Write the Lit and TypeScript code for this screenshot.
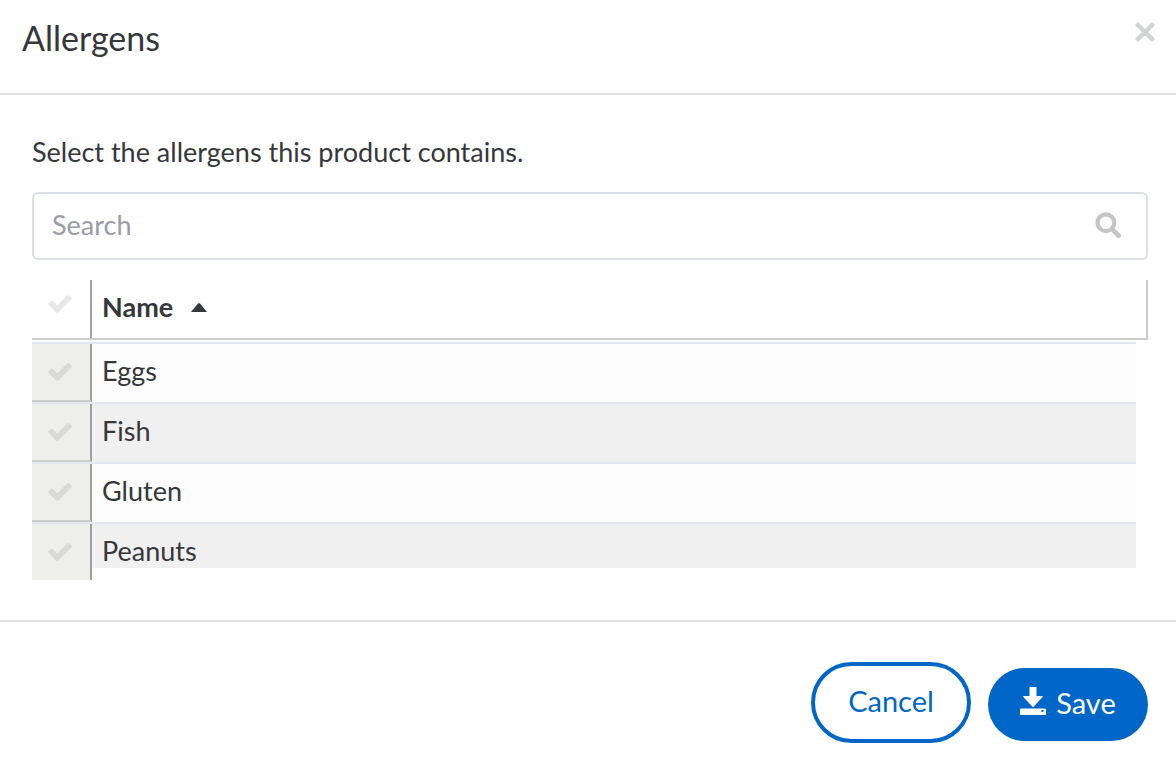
import { LitElement, html, css, svg } from "lit";
import { customElement, state } from "lit/decorators.js";

const check = svg`<path fill="currentColor" d="M1671 566q0 40-28 68l-724 724-136 136q-28 28-68 28t-68-28l-136-136-362-362q-28-28-28-68t28-68l136-136q28-28 68-28t68 28l294 295 656-657q28-28 68-28t68 28l136 136q28 28 28 68z"/>`;

@customElement("app-root")
export class AppRoot extends LitElement {
  static styles = css`
    :host {
      display: block;
      min-height: 100vh;
      background: #fff;
      color: #36373b;
      font-family: Lato, "Open Sans", sans-serif;
      font-size: 27px;
      line-height: 36px;
    }
    * { box-sizing: border-box; }
    button, input { font: inherit; margin: 0; }
    header {
      display: flex;
      justify-content: space-between;
      align-items: flex-start;
      padding: 18px 20px 35px 22px;
      border-bottom: 2px solid #dfdfe0;
    }
    h1 { margin: 0; font-size: 34px; line-height: 40px; font-weight: 400; }
    .close {
      display: flex;
      border: 0;
      padding: 3px 0;
      background: none;
      color: #d2d4d4;
      cursor: pointer;
    }
    main { padding: 39px 28px 40px 32px; }
    p { margin: 0 0 22px; }
    .search {
      display: flex;
      align-items: center;
      height: 68px;
      padding: 0 25px 2px 18px;
      border: 2px solid #dce0e5;
      border-radius: 6px;
      color: #c5c5c5;
    }
    .search input {
      flex: 1;
      min-width: 0;
      padding: 0;
      border: 0;
      outline: 0;
      background: none;
      color: #36373b;
    }
    .search input::placeholder { color: #9c9ba8; opacity: 1; }
    .grid { position: relative; margin-top: 20px; }
    table, thead, tbody { display: block; }
    tr { display: grid; grid-template-columns: 60px 1fr; }
    th, td { display: block; padding: 0; text-align: left; }
    thead { border-bottom: 2px solid #ccc; border-right: 2px solid #ccc; }
    thead tr { height: 58px; }
    .pick { border-right: 2px solid #a0a0a0; }
    .pick label { display: grid; place-items: center; height: 100%; padding-right: 2px; color: #d9d9d7; cursor: pointer; }
    thead .pick label { padding-bottom: 10px; color: #e8e8e8; }
    .pick input { appearance: none; grid-area: 1 / 1; width: 24px; height: 24px; }
    .pick svg { grid-area: 1 / 1; pointer-events: none; }
    .pick input:checked + svg { color: #0067c8; }
    .sort {
      display: flex;
      align-items: center;
      gap: 18px;
      height: 54px;
      padding: 0 10px;
      border: 0;
      background: none;
      color: inherit;
      font-weight: 700;
      cursor: pointer;
    }
    .desc svg { transform: rotate(180deg); }
    tbody { height: 238px; margin-top: 2px; padding-right: 12px; overflow: hidden; }
    tbody tr { height: 60px; border-top: 2px solid #e4e8ed; background: #fdfdfd; }
    tbody tr:nth-child(even) { background: #f0f0f0; }
    tbody .pick { background: #eeefea; border-bottom: 2px solid #ccc; }
    .name { padding: 9px 10px; }
    .track { position: absolute; left: 60px; right: 0; bottom: 0; height: 12px; background: #fff; }
    footer {
      display: flex;
      justify-content: flex-end;
      align-items: flex-start;
      gap: 17px;
      padding: 40px 28px 23px;
      border-top: 2px solid #dfdfe0;
    }
    footer button {
      display: flex;
      justify-content: center;
      align-items: center;
      min-width: 160px;
      padding: 0 6px 4px;
      border-radius: 41px;
      font-size: 29px;
      cursor: pointer;
    }
    .cancel { height: 81px; border: 4px solid #0067c8; background: #fff; color: #0067c8; }
    .save { height: 73px; margin-top: 6px; gap: 10px; border: 0; background: #0067c8; color: #fff; }
  `;

  @state() private ascending = true;
  @state() private query = "";
  @state() private selected = new Set<string>();
  private items = ["Eggs", "Fish", "Gluten", "Peanuts"];

  private toggle(name: string) {
    const next = new Set(this.selected);
    next.has(name) ? next.delete(name) : next.add(name);
    this.selected = next;
  }

  private toggleAll(e: Event) {
    this.selected = new Set((e.target as HTMLInputElement).checked ? this.items : []);
  }

  private get rows() {
    const q = this.query.toLowerCase();
    const found = this.items.filter((n) => n.toLowerCase().includes(q));
    return this.ascending ? found : found.reverse();
  }

  render() {
    return html`
      <header>
        <h1>Allergens</h1>
        <button class="close" aria-label="Close">
          <svg width="22" height="22" viewBox="0 0 22 22" stroke-linejoin="round"><path d="M4 2 L11 9 L18 2 L20 4 L13 11 L20 18 L18 20 L11 13 L4 20 L2 18 L9 11 L2 4 Z" fill="currentColor" stroke="currentColor" stroke-width="1.6"/></svg>
        </button>
      </header>
      <main>
        <p>Select the allergens this product contains.</p>
        <label class="search">
          <input type="text" placeholder="Search" aria-label="Search" @input=${(e: Event) => (this.query = (e.target as HTMLInputElement).value)} />
          <svg width="26" height="26" viewBox="0 0 26 26" fill="none" stroke="currentColor">
            <circle cx="10.9" cy="10.7" r="8.4" stroke-width="4.2"/>
            <path d="M17.9 17.9 L23.6 23.6" stroke-width="4.8" stroke-linecap="round"/>
          </svg>
        </label>
        <div class="grid">
          <table>
            <thead>
              <tr>
                <th class="pick">
                  <label>
                    <input type="checkbox" aria-label="Select all" @change=${this.toggleAll} />
                    <svg width="24" height="18" viewBox="121 334 1550 1188">${check}</svg>
                  </label>
                </th>
                <th>
                  <button class="sort ${this.ascending ? "" : "desc"}" @click=${() => (this.ascending = !this.ascending)}>
                    Name
                    <svg width="16" height="10" viewBox="0 0 16 10"><path d="M0 10 L7 1.4 Q8 0.6 9 1.4 L16 10 Z" fill="currentColor"/></svg>
                  </button>
                </th>
              </tr>
            </thead>
            <tbody>
              ${this.rows.map(
                (name) => html`
                  <tr>
                    <td class="pick">
                      <label>
                        <input type="checkbox" aria-label=${name} .checked=${this.selected.has(name)} @change=${() => this.toggle(name)} />
                        <svg width="24" height="18" viewBox="121 334 1550 1188">${check}</svg>
                      </label>
                    </td>
                    <td class="name">${name}</td>
                  </tr>
                `
              )}
            </tbody>
          </table>
          <div class="track"></div>
        </div>
      </main>
      <footer>
        <button class="cancel">Cancel</button>
        <button class="save">
          <svg width="26" height="32" viewBox="0 0 26 32" fill="currentColor">
            <path d="M9.5 0 H16.5 V9 H22.4 Q23.4 9.2 22.6 10.1 L13.6 19.8 Q13 20.4 12.4 19.8 L3.4 10.1 Q2.6 9.2 3.6 9 H9.5 Z"/>
            <path fill-rule="evenodd" d="M1 21.4 H25 Q26 21.4 26 22.4 V28 H0 V22.4 Q0 21.4 1 21.4 Z M21.4 23 V25 H23.4 V23 Z"/>
          </svg>
          Save
        </button>
      </footer>
    `;
  }
}
